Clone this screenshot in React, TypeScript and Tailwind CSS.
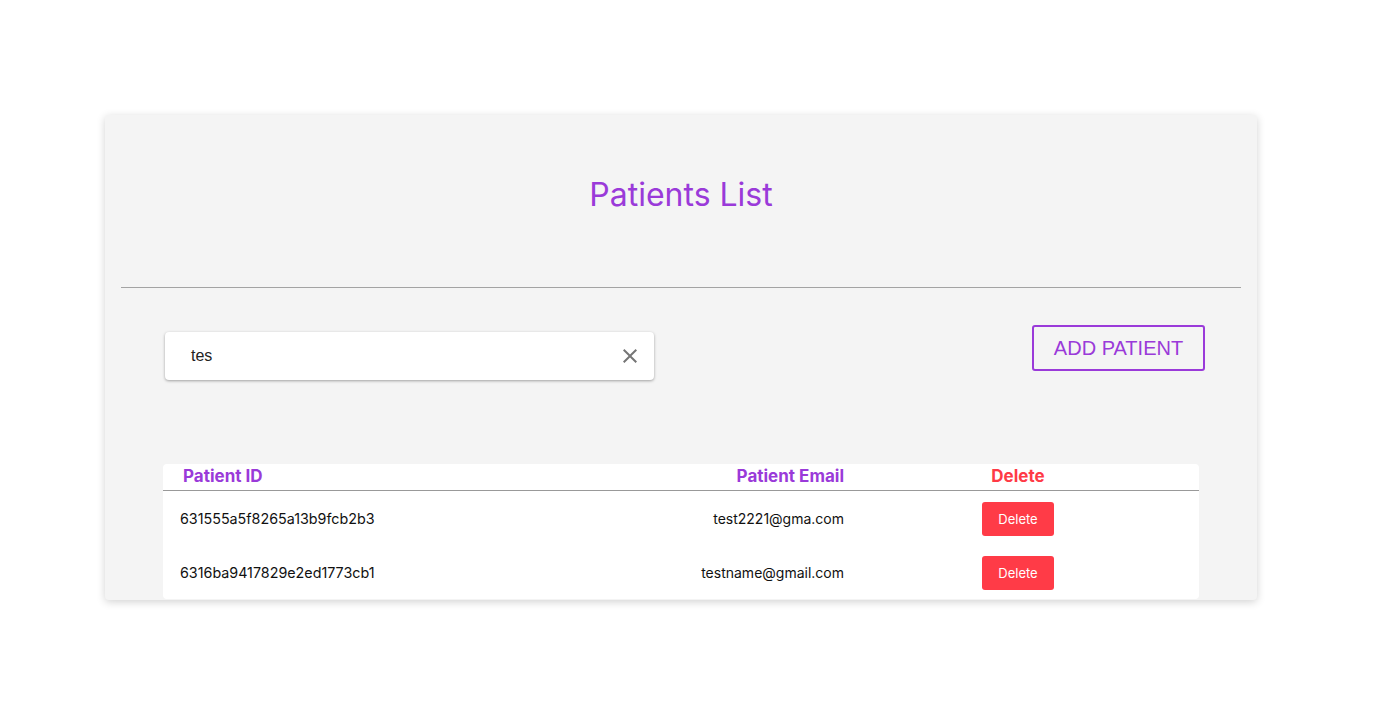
import React from "react";

const PURPLE = "text-[#9a3ad9]";

const patients = [
  { id: "631555a5f8265a13b9fcb2b3", email: "test2221@gma.com" },
  { id: "6316ba9417829e2ed1773cb1", email: "testname@gmail.com" },
];

const CloseIcon = () => (
  <svg width="24" height="24" viewBox="0 0 24 24" fill="#757575">
    <path d="M19 6.41 17.59 5 12 10.59 6.41 5 5 6.41 10.59 12 5 17.59 6.41 19 12 13.41 17.59 19 19 17.59 13.41 12z" />
  </svg>
);

const App = () => {
  return (
    <div className="min-h-screen bg-white pt-[115px] font-['Inter',sans-serif]">
      <div className="ml-[105px] w-[1152px] rounded bg-[#f4f4f4] shadow-[0_2px_8px_rgba(0,0,0,0.18)] overflow-hidden">
        <h1 className={`pt-[60px] text-center text-[32px] leading-[39px] ${PURPLE}`}>
          Patients List
        </h1>
        <hr className="mx-4 mt-[73px] border-0 h-px bg-[#a3a3a3]" />

        <div className="flex items-start justify-between pl-[60px] pr-[52px] mt-[37px]">
          <div className="mt-[7px] flex h-[48px] w-[489px] items-center justify-between rounded bg-white pl-[26px] pr-[12px] shadow-[0_1px_3px_rgba(0,0,0,0.35)]">
            <span className="font-['Liberation_Sans',Arial,sans-serif] text-base text-[#222]">
              tes
            </span>
            <CloseIcon />
          </div>
          <button
            className={`h-[46px] w-[173px] rounded-[3px] border-2 border-[#9a3ad9] font-['Liberation_Sans',Arial,sans-serif] text-[20px] ${PURPLE}`}
          >
            ADD PATIENT
          </button>
        </div>

        <div className="mx-[58px] mt-[84px] mb-px rounded bg-white">
          <div className="grid h-[27px] grid-cols-[441px_240px_348px_1fr] items-center border-b border-[#999] text-[17px] font-bold">
            <span className={`pl-5 ${PURPLE}`}>Patient ID</span>
            <span className={`text-right ${PURPLE}`}>Patient Email</span>
            <span className="text-center text-[#ff3a46]">Delete</span>
            <span />
          </div>
          {patients.map((p) => (
            <div
              key={p.id}
              className="grid h-[54px] pt-[2px] grid-cols-[441px_240px_348px_1fr] items-center text-sm text-[#111]"
            >
              <span className="pl-[17px] text-[14.3px]">{p.id}</span>
              <span className="text-right">{p.email}</span>
              <span className="flex justify-center">
                <button className="h-[34px] w-[72px] rounded-[3px] bg-[#ff3b47] text-[13px] text-white">
                  Delete
                </button>
              </span>
              <span />
            </div>
          ))}
        </div>
      </div>
    </div>
  );
};

export default App;
